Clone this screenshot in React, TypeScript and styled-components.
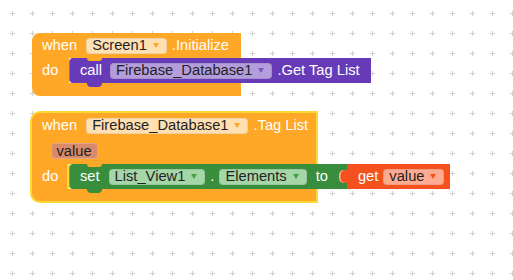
import styled, { createGlobalStyle } from "styled-components";

const colors = {
  event: "#FFA726",
  eventField: "#FFE0B2",
  eventArrow: "#FFA726",
  selected: "#FDD835",
  method: "#673AB7",
  methodField: "#B39DDB",
  methodArrow: "#7E57C2",
  setter: "#388E3C",
  setterField: "#A5D6A7",
  setterArrow: "#43A047",
  getter: "#F4511E",
  getterField: "#FFAB91",
  getterArrow: "#F4511E",
  param: "#D88A6C",
  grid: "#cfcfcf",
};

const GlobalStyle = createGlobalStyle`
  html, body {
    margin: 0;
    padding: 0;
    background: #fff;
  }
  body {
    font-family: "Liberation Sans", Arial, sans-serif;
  }
`;

const Workspace = styled.div`
  position: relative;
  width: 513px;
  height: 280px;
  overflow: hidden;
  background: #fff;
`;

const GridLayer = styled.svg`
  position: absolute;
  inset: 0;
  width: 100%;
  height: 100%;
`;

const Stack = styled.div`
  position: relative;
  display: flex;
  flex-direction: column;
  align-items: flex-start;
  gap: 15px;
  padding: 33px 0 0 32px;
  font-size: 14.7px;
  line-height: 1;
`;

const Event = styled.div<{ $selected?: boolean }>`
  display: inline-flex;
  flex-direction: column;
  margin-left: ${({ $selected }) => ($selected ? "-2px" : "0")};
`;

const Header = styled.div<{ $selected?: boolean; $padRight: number }>`
  display: flex;
  align-items: center;
  gap: 5px;
  height: 25px;
  padding: 0 ${({ $padRight }) => $padRight}px 0 10px;
  background: ${colors.event};
  border-radius: 8px 0 0 0;
  ${({ $selected }) =>
    $selected &&
    `
    border: 2px solid ${colors.selected};
    border-bottom: none;
    border-radius: 10px 0 0 0;
  `}
`;

const Params = styled.div<{ $selected?: boolean }>`
  display: flex;
  align-items: center;
  height: 26px;
  padding-left: 18.5px;
  background: ${colors.event};
  ${({ $selected }) =>
    $selected &&
    `
    border-left: 2px solid ${colors.selected};
    border-right: 2px solid ${colors.selected};
  `}
`;

const Body = styled.div`
  display: flex;
  align-items: stretch;
  width: 0;
  min-width: 100%;
  height: 25px;
`;

const Arm = styled.div<{ $selected?: boolean }>`
  box-sizing: border-box;
  flex-shrink: 0;
  display: flex;
  align-items: center;
  width: ${({ $selected }) => ($selected ? "39px" : "37px")};
  padding-left: 10px;
  background: ${colors.event};
  ${({ $selected }) =>
    $selected &&
    `
    border-left: 2px solid ${colors.selected};
    border-right: 2px solid ${colors.selected};
  `}
`;

const Footer = styled.div<{ $selected?: boolean }>`
  height: ${({ $selected }) => ($selected ? "12px" : "13px")};
  background: ${colors.event};
  border-radius: 0 0 0 8px;
  ${({ $selected }) =>
    $selected &&
    `
    border: 2px solid ${colors.selected};
    border-top: none;
    border-radius: 0 0 0 10px;
  `}
`;

const Statement = styled.div<{ $color: string; $socket: string; $padRight: number }>`
  position: relative;
  flex-shrink: 0;
  display: flex;
  align-items: center;
  gap: 5px;
  height: 25px;
  padding: 0 ${({ $padRight }) => $padRight}px 0 11px;
  background: ${({ $color }) => $color};
  border-radius: 4px 0 0 4px;
  box-shadow: inset 1px 0 0 rgba(255, 255, 255, 0.25);
  z-index: 1;

  &::before {
    content: "";
    position: absolute;
    top: 0;
    left: 18px;
    width: 15px;
    height: 3px;
    background: ${({ $socket }) => $socket};
    border-radius: 0 0 6px 6px;
  }

  &::after {
    content: "";
    position: absolute;
    bottom: -4px;
    left: 18px;
    width: 15px;
    height: 4px;
    background: ${({ $color }) => $color};
    border-radius: 0 0 6px 6px;
  }
`;

const Value = styled.div<{ $color: string }>`
  position: relative;
  flex-shrink: 0;
  display: flex;
  align-items: center;
  gap: 5px;
  height: 25px;
  padding: 0 6px 0 11px;
  background: ${({ $color }) => $color};
  z-index: 1;

  &::before {
    content: "";
    position: absolute;
    top: 6px;
    left: -8px;
    width: 8px;
    height: 13px;
    background: ${({ $color }) => $color};
    border-radius: 5px 0 0 5px;
    box-shadow: inset 1.5px 0 0 rgba(255, 220, 200, 0.7);
  }
`;

const Label = styled.span<{ $ml?: number; $mr?: number }>`
  color: #fff;
  white-space: pre;
  margin-left: ${({ $ml }) => $ml ?? 0}px;
  margin-right: ${({ $mr }) => $mr ?? 0}px;
`;

const Field = styled.span<{ $bg: string }>`
  box-sizing: border-box;
  display: inline-flex;
  align-items: center;
  gap: 6px;
  height: 16px;
  padding: 0 7px 0 5px;
  background: ${({ $bg }) => $bg};
  border: 1px solid rgba(0, 0, 0, 0.07);
  border-radius: 4px;
  color: #1f1f1f;
  white-space: pre;
`;

const Arrow = styled.span<{ $color: string }>`
  width: 0;
  height: 0;
  border-left: 3px solid transparent;
  border-right: 3px solid transparent;
  border-top: 5px solid ${({ $color }) => $color};
`;

const ParamChip = styled.span`
  box-sizing: border-box;
  display: inline-flex;
  align-items: center;
  height: 16px;
  padding: 0 5px;
  background: ${colors.param};
  border: 1px solid #e6a48b;
  border-radius: 4px;
  color: #1f1f1f;
`;

function Dropdown({ text, bg, arrow }: { text: string; bg: string; arrow: string }) {
  return (
    <Field $bg={bg}>
      {text}
      <Arrow $color={arrow} />
    </Field>
  );
}

function Grid() {
  return (
    <GridLayer>
      <defs>
        <pattern id="ws-grid" width="20" height="20" patternUnits="userSpaceOnUse">
          <path d="M10 13.5H15M12.5 11V16" stroke={colors.grid} strokeWidth="1" />
        </pattern>
      </defs>
      <rect width="100%" height="100%" fill="url(#ws-grid)" />
    </GridLayer>
  );
}

export default function App() {
  return (
    <>
      <GlobalStyle />
      <Workspace>
        <Grid />
        <Stack>
          <Event>
            <Header $padRight={12}>
              <Label $mr={4}>when</Label>
              <Dropdown text="Screen1" bg={colors.eventField} arrow={colors.eventArrow} />
              <Label>.Initialize</Label>
            </Header>
            <Body>
              <Arm>
                <Label>do</Label>
              </Arm>
              <Statement $color={colors.method} $socket={colors.event} $padRight={11}>
                <Label $mr={3}>call</Label>
                <Dropdown text="Firebase_Database1" bg={colors.methodField} arrow={colors.methodArrow} />
                <Label>.Get Tag List</Label>
              </Statement>
            </Body>
            <Footer />
          </Event>

          <Event $selected>
            <Header $selected $padRight={8}>
              <Label $mr={4}>when</Label>
              <Dropdown text="Firebase_Database1" bg={colors.eventField} arrow={colors.eventArrow} />
              <Label>.Tag List</Label>
            </Header>
            <Params $selected>
              <ParamChip>value</ParamChip>
            </Params>
            <Body>
              <Arm $selected>
                <Label>do</Label>
              </Arm>
              <Statement $color={colors.setter} $socket={colors.event} $padRight={19}>
                <Label $mr={4}>set</Label>
                <Dropdown text="List_View1" bg={colors.setterField} arrow={colors.setterArrow} />
                <Label>.</Label>
                <Dropdown text="Elements" bg={colors.setterField} arrow={colors.setterArrow} />
                <Label $ml={4}>to</Label>
              </Statement>
              <Value $color={colors.getter}>
                <Label>get</Label>
                <Dropdown text="value" bg={colors.getterField} arrow={colors.getterArrow} />
              </Value>
            </Body>
            <Footer $selected />
          </Event>
        </Stack>
      </Workspace>
    </>
  );
}
